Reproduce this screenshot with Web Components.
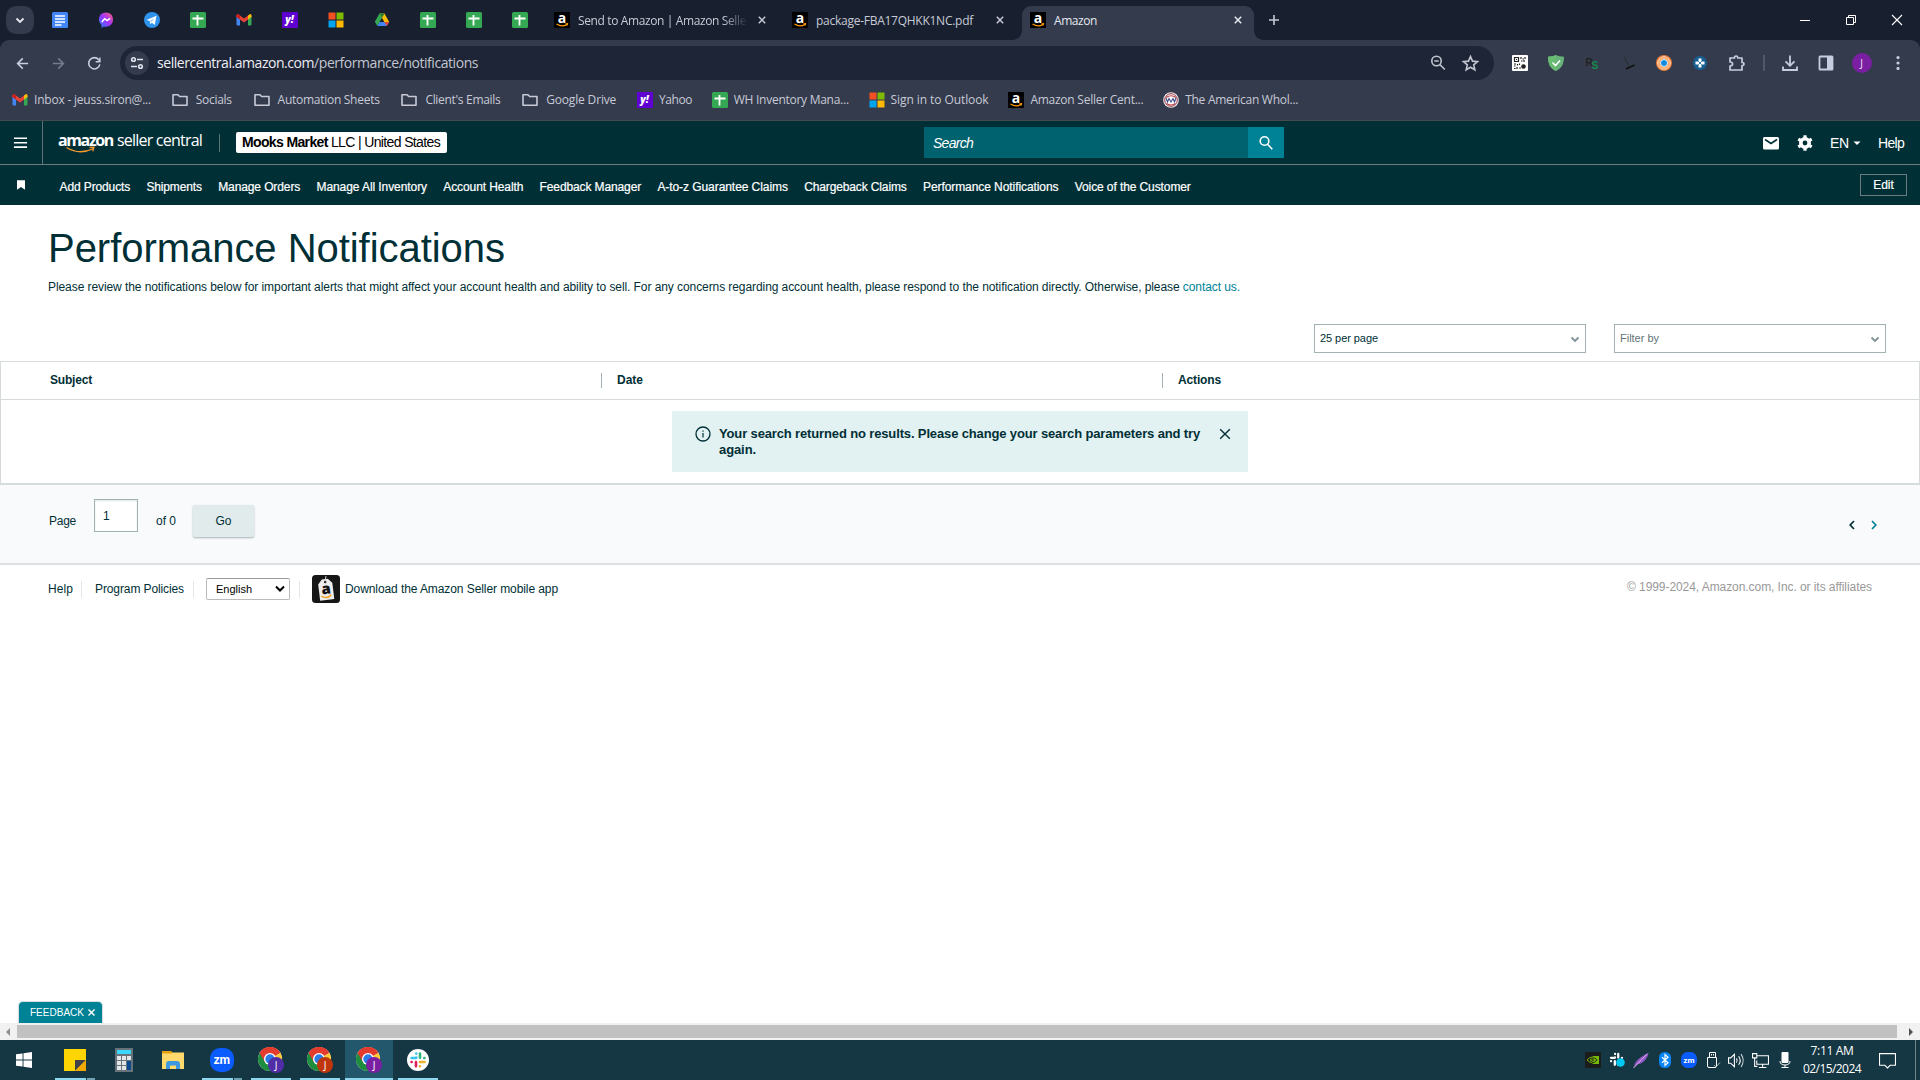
<!DOCTYPE html>
<html lang="en">
<head>
<meta charset="utf-8">
<title>Amazon</title>
<style>
    html, body { margin: 0; height: 100%; overflow: hidden; background: #fff; }
    body {
        display: flex;
        flex-direction: column;
        width: 1920px;
        height: 1080px;
        font: 12px/16px "Liberation Sans", Arial, sans-serif;
        color: #002f36;
    }
</style>
</head>
<body>
<tab-strip></tab-strip>
<browser-toolbar></browser-toolbar>
<bookmarks-bar></bookmarks-bar>
<seller-header></seller-header>
<seller-nav></seller-nav>
<notifications-page></notifications-page>
<feedback-bar></feedback-bar>
<scroll-bar></scroll-bar>
<task-bar></task-bar>

<script>
// Each icon is [viewBox, markup]
const CHROME = `<circle cx="12" cy="12" r="12" fill="#fff"/><path d="M12 12 1.6 6A12 12 0 0 1 22.4 6z" fill="#e33b2e"/><path d="M12 12 22.4 6A12 12 0 0 1 12 24z" fill="#fcc934"/><path d="M1.6 6A12 12 0 0 0 12 24L17.2 15 12 12z" fill="#1e8e3e"/><path d="M12 6h10.4A12 12 0 0 0 1.6 6l5.2 9z" fill="#e33b2e"/><circle cx="12" cy="12" r="6" fill="#fff"/><circle cx="12" cy="12" r="4.7" fill="#2a7de9"/>`;
const badge = (color) => `${CHROME}<circle cx="18" cy="18" r="8" fill="${color}"/><text x="18" y="21.6" font-family="Open Sans, sans-serif" font-size="10" fill="#fff" text-anchor="middle">J</text>`;
const amazonA = `<path fill="#000" d="M0 0h16v16H0z"/><text x="8" y="10.5" font-family="Open Sans, sans-serif" font-weight="700" font-size="14" fill="#fff" text-anchor="middle">a</text><path d="M2.5 12q5.500 3.500 10.500.4M11.500 11.800l2-.2-.4 1.900" fill="none" stroke="#f90" stroke-width="1.2"/>`;
const slack = (r, g, b, y) => `<g fill="none" stroke-width="3.400" stroke-linecap="round"><path stroke="${b}" d="M9.2 3v.1M9.2 8.300v.1M3 8.800h6"/><path stroke="${g}" d="M14 3v5.500M19.600 8.800h.2"/><path stroke="${y}" d="M14 14h6M14 19.500v.2"/><path stroke="${r}" d="M8.800 14v5.500M3 14h.2"/></g>`;

const ICONS = {
    docs: ["0 0 16 16", `<rect width="16" height="16" rx="1.5" fill="#4285f4"/><path d="M3 4h10M3 7h10M3 10h10M3 13h6.5" stroke="#fff" stroke-width="1.7"/>`],
    messenger: ["0 0 16 16", `<defs><linearGradient id="m" x1="0" y1="1" x2="1" y2="0"><stop offset="0" stop-color="#1688ff"/><stop offset=".5" stop-color="#a033ff"/><stop offset="1" stop-color="#ff6070"/></linearGradient></defs><path d="M8 .5C3.600.500 1 3.600 1 7.600c0 2.300 1 4.200 2.500 5.400V16l2.400-1.400c5 1.200 9.100-2.200 9.100-7C15 3.600 12.400.500 8 .5z" fill="url(#m)"/><path d="m3.800 10 2.800-3.300 2.500 1.800 3-2.200" fill="none" stroke="#fff" stroke-width="1.500"/>`],
    telegram: ["0 0 16 16", `<circle cx="8" cy="8" r="8" fill="#2f93ec"/><path d="m2.500 8 10-4.200-1.700 9.200-3-2.200-1.500 1.400-.5-3.200z" fill="#fff"/><path d="m6 9 4.500-3L7.500 10z" fill="#9cc5e8"/>`],
    sheets: ["0 0 16 16", `<rect width="16" height="16" rx="1.5" fill="#34a853"/><path d="M2.500 6.500h11M7.500 3v10.500" stroke="#fff" stroke-width="1.800"/>`],
    gmail: ["0 0 16 16", `<path d="M.5 3.500 4 6v7.500H1.500a1 1 0 0 1-1-1z" fill="#4285f4"/><path d="M15.500 3.500 12 6v7.500h2.500a1 1 0 0 0 1-1z" fill="#34a853"/><path d="M12 3.500 14 2q1.500-.2 1.500 1.500V5L12 7.600z" fill="#fbbc04"/><path d="M.5 5V3.500Q.5 1.800 2 2l6 4.500 4-3v4.100l-4 3z" fill="#ea4335"/><path d="M.5 5V3.500Q.5 1.800 2 2l2 1.500v4.100z" fill="#c5221f"/>`],
    yahoo: ["0 0 16 16", `<path fill="#5f01d1" d="M0 0h16v16H0z"/><text x="7.600" y="11" font-family="Open Sans, sans-serif" font-size="10" font-weight="800" font-style="italic" fill="#fff" text-anchor="middle">y!</text>`],
    microsoft: ["0 0 16 16", `<path fill="#f25022" d="M.5.500h7v7h-7z"/><path fill="#7fba00" d="M8.500.500h7v7h-7z"/><path fill="#00a4ef" d="M.5 8.500h7v7h-7z"/><path fill="#ffb900" d="M8.500 8.500h7v7h-7z"/>`],
    drive: ["0 0 16 16", `<path d="M5.500 1.500 8 5.800 3.300 14 .8 9.800z" fill="#34a853"/><path d="M5.500 1.500h5L15.200 10h-4.900z" fill="#fbbc04"/><path d="M5.500 1.500h5L8 5.800z" fill="#188038"/><path d="M3.300 14 5.700 9.900h9.500L12.800 14z" fill="#4285f4"/><path d="M12.800 14 10.400 9.900h4.800z" fill="#ea4335"/>`],
    amazon: ["0 0 16 16", amazonA],
    awhole: ["0 0 16 16", `<circle cx="8" cy="8" r="7.800" fill="#eee"/><circle cx="8" cy="8" r="6.300" fill="#fff" stroke="#9b3140" stroke-width="1"/><path d="M3 5.500q5-3.500 10 0M3.500 11.500q4.500 3 9 0" fill="none" stroke="#b74450" stroke-width="1.100"/><path d="m3 6 1.500 4L6 6.500 8 10l2-3.500 1.500 3.500L13 6" fill="none" stroke="#3f4e86" stroke-width="1.100"/>`],
    chevron: ["0 0 16 16", `<path d="m4.500 6.500 3.500 3.500 3.500-3.500" fill="none" stroke="currentColor" stroke-width="1.800"/>`],
    close: ["0 0 16 16", `<path d="m4.800 4.800 6.400 6.400m0-6.400-6.400 6.400" stroke="currentColor" stroke-width="1.500"/>`],
    plus: ["0 0 16 16", `<path d="M8 3v10M3 8h10" stroke="currentColor" stroke-width="1.600"/>`],
    minimize: ["0 0 16 16", `<path d="M3 8.500h10" stroke="#fff"/>`],
    restore: ["0 0 16 16", `<path d="M3.500 5.500h7v7h-7zM5.500 5.500v-2h7v7h-2" fill="none" stroke="#fff"/>`],
    winclose: ["0 0 16 16", `<path d="m3 3 10 10m0-10L3 13" stroke="#fff" stroke-width="1.100"/>`],
    back: ["0 0 16 16", `<path d="M14 8H3m5.300-5.500L2.800 8l5.500 5.500" fill="none" stroke="currentColor" stroke-width="1.700"/>`],
    forward: ["0 0 16 16", `<path d="M2 8h11M7.700 2.500 13.200 8l-5.500 5.500" fill="none" stroke="currentColor" stroke-width="1.700"/>`],
    reload: ["0 0 16 16", `<path d="M13.700 9A6 6 0 1 1 12.500 4l1.300 1.600" fill="none" stroke="currentColor" stroke-width="1.700"/><path d="M14.500 1.500v5.300H9.200V5.300H13V1.500z" fill="currentColor"/>`],
    tune: ["0 0 16 16", `<g fill="none" stroke="currentColor" stroke-width="1.600"><circle cx="4.500" cy="4.500" r="1.800"/><circle cx="11.500" cy="11.500" r="1.800"/><path d="M8 4.500h6M2 11.500h6"/></g>`],
    zoomout: ["0 0 16 16", `<g fill="none" stroke="currentColor" stroke-width="1.600"><circle cx="6.500" cy="6" r="4.700"/><path d="m9.800 9.500 5 5M4.300 6h4.400"/></g>`],
    star: ["0 0 16 16", `<path d="m8 1.500 1.900 4.300 4.700.4L11 9.300l1.100 4.600L8 11.500l-4.100 2.400L5 9.300 1.400 6.200l4.700-.4z" fill="none" stroke="currentColor" stroke-width="1.500"/>`],
    qr: ["0 0 16 16", `<rect width="16" height="16" rx="1" fill="#fff"/><path d="M2.500 2.500h4v4h-4zM4 4.500h1M9 2v2m1.500 0H12m1-2v2m-1 1v2M9 6h1.500M2 9h2m1.500 0v1.500M2 11h1.500M5 12v2M2 13.500h1.500M7.500 8.500v1.500M7 13h2" fill="none" stroke="#222" stroke-width="1.200"/><circle cx="11.500" cy="11.500" r="2.300" fill="#222"/>`],
    shield: ["0 0 16 16", `<path d="M8 0c2.500 1.200 5 1.700 8 1.700C16 9 13.500 13.500 8 16 2.500 13.500 0 9 0 1.700 3 1.700 5.500 1.200 8 0z" fill="#67b279"/><path d="M0 1.700C3 1.700 5.500 1.200 8 0v16C2.500 13.500 0 9 0 1.700z" fill="#68bc71"/><path d="m4.500 7.500 3 3 4.500-5" fill="none" stroke="#fff" stroke-width="1.600"/>`],
    rs: ["0 0 16 16", `<g font-family="Liberation Sans, sans-serif" font-weight="700"><text x="1.500" y="10.500" font-size="10" fill="#222">R</text><text x="7.500" y="13.500" font-size="10" fill="#168b4b">S</text></g>`],
    cart: ["0 0 16 16", `<path d="m4 1.500 5 10.500" stroke="#222" stroke-width=".7"/><path d="m6 14 8.500-4" stroke="#111" stroke-width="1.900"/>`],
    eye: ["0 0 16 16", `<circle cx="8" cy="8" r="8" fill="#e77a35"/><circle cx="8" cy="8" r="6.300" fill="#ffab6b" stroke="#f9d3b3"/><circle cx="8" cy="8" r="3.500" fill="#1489e0" stroke="#d3ecfa"/>`],
    bluecross: ["0 0 16 16", `<circle cx="8" cy="8" r="7" fill="#175f91"/><path d="M6.500 3.500h3v3h3v3h-3v3h-3v-3h-3v-3h3z" fill="#fff"/><path d="m6.300 6.300 3.400 3.400m0-3.400-3.400 3.400" stroke="#2e80b4" stroke-width="1"/>`],
    puzzle: ["0 0 18 18", `<path d="M2 4h4.500V3.600a1.600 1.600 0 0 1 3.200 0V4H14v4.500h.5a1.500 1.500 0 0 1 0 3H14V16H2v-4q2.600-.2 2.600-2T2 8z" fill="none" stroke="currentColor" stroke-width="1.700" stroke-linejoin="round"/>`],
    download: ["0 0 16 16", `<path d="M8 .500v10M3.500 6.300 8 10.800l4.500-4.500M1 11.500V15h14v-3.500" fill="none" stroke="currentColor" stroke-width="1.800"/>`],
    panel: ["0 0 16 16", `<rect x="1.500" y="1.500" width="13" height="13" rx=".6" fill="none" stroke="currentColor" stroke-width="1.800"/><path fill="currentColor" d="M9 1h6v14H9z"/>`],
    dots: ["0 0 16 16", `<g fill="currentColor"><circle cx="8" cy="2.600" r="1.600"/><circle cx="8" cy="8" r="1.600"/><circle cx="8" cy="13.400" r="1.600"/></g>`],
    folder: ["0 0 16 16", `<path d="M1 13.200V2.800h5l1.600 1.700H15v8.700z" fill="none" stroke="currentColor" stroke-width="1.600" stroke-linejoin="round"/>`],
    menu: ["0 0 16 16", `<path d="M1 3.500h14M1 8.200h14M1 12.900h14" stroke="#fff" stroke-width="1.700"/>`],
    bookmark: ["0 0 16 16", `<path d="M4 3.200h8v9.600L8 10l-4 2.800z" fill="#fff"/>`],
    search: ["0 0 16 16", `<g fill="none" stroke="#fff" stroke-width="1.600"><circle cx="6.500" cy="6" r="4.300"/><path d="m9.500 9.200 4.800 5"/></g>`],
    mail: ["0 0 16 16", `<rect y="2" width="16" height="12.500" rx="1.500" fill="#fff"/><path d="m2 4.500 6 4 6-4" fill="none" stroke="#002f36" stroke-width="1.600"/>`],
    gear: ["0 0 16 16", `<circle cx="8" cy="8" r="4.200" fill="none" stroke="#fff" stroke-width="3.600"/><path d="M8 .300v3M8 12.700v3M1.300 4.200 4 5.700m8 4.600 2.700 1.500m-13.400 0L4 10.300m8-4.600 2.700-1.500" stroke="#fff" stroke-width="3.200"/>`],
    caret: ["0 0 8 8", `<path d="M.500 2.500h7L4 6z" fill="#fff"/>`],
    info: ["0 0 16 16", `<circle cx="8" cy="8" r="7" fill="none" stroke="currentColor" stroke-width="1.300"/><path d="M8 7v4.500M8 4.400v1.300" stroke="currentColor" stroke-width="1.200"/>`],
    dismiss: ["0 0 16 16", `<path d="m3.200 3.200 9.600 9.600m0-9.600-9.600 9.600" stroke="currentColor" stroke-width="1.400"/>`],
    prev: ["0 0 16 16", `<path d="m10 4-3.800 4 3.800 4" fill="none" stroke="currentColor" stroke-width="1.700"/>`],
    next: ["0 0 16 16", `<path d="m6 4 3.800 4L6 12" fill="none" stroke="currentColor" stroke-width="1.700"/>`],
    sellerapp: ["0 0 28 28", `<rect width="28" height="28" rx="3.500" fill="#161616"/><g transform="rotate(-7 14 14)"><path d="M6.800 8.500 11 4h6l4 4.500V25H6.800z" fill="#eee"/><circle cx="14" cy="7" r="1.300" fill="#333"/><text x="14" y="19" font-family="Open Sans, sans-serif" font-weight="800" font-size="15" fill="#111" text-anchor="middle">a</text><path d="M8.500 20.500q5.500 4 10 0" fill="none" stroke="#f5a32c" stroke-width="1.600"/></g><path d="m13 6 1-5" stroke="#ccc"/>`],
    windows: ["0 0 16 16", `<path d="M0 2.300 6.600 1.400v6.200H0zM7.500 1.200 16 0v7.600H7.500zM0 8.400h6.600v6.200L0 13.700zM7.500 8.400H16V16l-8.500-1.200z" fill="#fff"/>`],
    notes: ["0 0 22 22", `<path fill="#fed500" d="M0 0h22v22H0z"/><path d="M11 22V11h11z" fill="#3f4148"/><path d="M11 22 22 11v11z" fill="#f1a900"/>`],
    calc: ["0 0 18 24", `<path fill="#68727b" d="M0 0h18v24H0z"/><path fill="#3bd7fb" d="M2 2h14v4H2z"/><path fill="#e2e6e9" d="M2 8h4v4H2zM7 8h4v4H7zM12 8h4v4h-4zM2 13h4v4H2zM7 13h4v4H7zM2 18h4v4H2zM7 18h4v4H7z"/><path fill="#08488d" d="M12 13h4v9h-4z"/>`],
    explorer: ["0 0 22 18", `<path fill="#e6a10c" d="M0 0h9l2 2v3H0z"/><path fill="#ffd96b" d="M0 2.500h9.500l1-1H22V18H0z"/><path fill="#3c98e0" d="M4 18v-5q0-3 3-3h8q3 0 3 3v5h-4v-3.500H8V18z"/>`],
    zoom: ["0 0 24 24", `<rect width="24" height="24" rx="10" fill="#0b5cff"/><text x="12" y="15.800" font-family="Lato, sans-serif" font-weight="900" font-size="12.500" fill="#fff" text-anchor="middle">zm</text>`],
    chrome1: ["0 0 26 26", badge("#512da8")],
    chrome2: ["0 0 26 26", badge("#bf360c")],
    chrome3: ["0 0 26 26", badge("#7b1fa2")],
    slack: ["0 0 22 22", `<circle cx="11" cy="11" r="11" fill="#fff"/><g transform="translate(2.200 2.200) scale(.77)">${slack("#e01e5a", "#2eb67d", "#36c5f0", "#ecb22e")}</g>`],
    nvidia: ["0 0 16 16", `<path fill="#1c1c1c" d="M0 0h16v16H0z"/><path fill="#76b900" d="M7.500 4H14v8H7.500z"/><path d="M2 8q4.500-5.500 10 0-5 5-10 0m3 0q2-2.800 5 0-2 2.500-5 0" fill="none" stroke="#76b900"/><path d="M7 6q3-1 5 2-2 3-5 2.500M7 8h2" fill="none" stroke="#1c1c1c" stroke-width=".9"/>`],
    slackTray: ["0 0 16 16", `<g transform="scale(.66)">${slack("#fff", "#fff", "#fff", "#fff")}</g><circle cx="11.500" cy="10.500" r="4.300" fill="#00c8f0"/>`],
    feather: ["0 0 16 16", `<path d="M1 15.500C1.500 8 8 5 15.500.500 15 6 10 12 4 12.500z" fill="#9259c4"/><path d="M.500 16 14 2" stroke="#e4b9f0" stroke-width=".9"/>`],
    bluetooth: ["0 0 16 16", `<rect x="2" width="12" height="16" rx="5.500" fill="#0a84f0"/><path d="m5 5.200 6 5.600-3 2.700v-11l3 2.700-6 5.600" fill="none" stroke="#fff" stroke-width="1.200"/>`],
    usb: ["0 0 16 16", `<g fill="none" stroke="#fff"><path d="M4.500 5.500v-5h6v5M2.500 5.500h9V14q0 1.500-1.500 1.500H4Q2.500 15.500 2.500 14zM6.500 2v1.500M8.500 2v1.500"/><path d="m9 13 2 2 4-4.500" stroke="#a9b9be"/></g>`],
    speaker: ["0 0 16 16", `<g fill="none" stroke="#fff"><path d="M.500 5.500h2l3.500-3.300v11.600L2.500 10.500h-2zM8 6q1.300 2 0 4M10 4q3 4 0 8"/><path d="M12.300 2q4 6 0 12" opacity=".8"/></g>`],
    network: ["0 0 16 16", `<g fill="none" stroke="#fff"><path d="M5 3.500h10.500v8h-11V8M10 11.500v3M6.500 14.500h7M.500 1.500h4v4h-4zM2.500 5.500v8H5"/></g>`],
    mic: ["0 0 16 16", `<rect x="4.500" y="0" width="7" height="11" rx="1" fill="#fff"/><path d="M3 9q0 4 5 4t5-4M8 13v2.500M4.500 15.500h7" fill="none" stroke="#fff"/>`],
    action: ["0 0 16 16", `<path d="M.500 1.500h15v11h-5L8 15l-2.500-2.500h-5z" fill="none" stroke="#fff"/>`],
    left: ["0 0 8 8", `<path d="M6 0v8L2 4z" fill="#8d8d8d"/>`],
    right: ["0 0 8 8", `<path d="M2 0v8l4-4z" fill="#505050"/>`]
};

/**
 * UiIcon
 * Attributes: name, size (width), h (height, defaults to size)
 */
class UiIcon extends HTMLElement {
    connectedCallback() {
        const root = this.shadowRoot || this.attachShadow({ mode: "open" });
        const size = Number(this.getAttribute("size") || 16);
        const height = Number(this.getAttribute("h") || size);
        const [box, markup] = ICONS[this.getAttribute("name")];
        root.innerHTML = `
            <style>
                :host { display: block; flex: none; width: ${size}px; height: ${height}px; }
                svg { display: block; overflow: visible; }
            </style>
            <svg viewBox="${box}" width="${size}" height="${height}">${markup}</svg>`;
    }
}

/**
 * FitText
 * One line of text, tracked so that it spans exactly the width in the "w" attribute
 */
class FitText extends HTMLElement {
    connectedCallback() {
        const w = Number(this.getAttribute("w"));
        const root = this.shadowRoot || this.attachShadow({ mode: "open" });
        root.innerHTML = `
            <style>
                :host { display: block; flex: none; width: ${w}px; white-space: nowrap; }
                span { display: inline-block; }
            </style>
            <span><slot></slot></span>`;
        const span = root.querySelector("span");
        const natural = span.getBoundingClientRect().width;
        const count = this.textContent.length;
        if (natural && count) span.style.letterSpacing = `${(w - natural) / count}px`;
    }
}

class BaseElement extends HTMLElement {
    connectedCallback() {
        if (this.shadowRoot) return;
        this.attachShadow({ mode: "open" }).innerHTML = this.render();
    }
}

class TabStrip extends BaseElement {
    render() {
        const pinned = ["docs", "messenger", "telegram", "sheets", "gmail", "yahoo", "microsoft", "drive", "sheets", "sheets", "sheets"];
        return `
            <style>
                :host { display: flex; flex: none; height: 40px; box-sizing: border-box; padding-left: 6px; background: #181f2f; color: #c7cad6; font: 12px/16px "Open Sans", sans-serif; }
                .list { display: grid; place-items: center; width: 28px; height: 28px; margin: 6px 3px 0 0; border-radius: 10px; background: #343b4d; color: #e6e8ef; }
                .pin { display: flex; align-items: center; width: 46px; height: 40px; box-sizing: border-box; padding-left: 15px; }
                .pin::after, .tab.sep::after { content: ""; width: 1.500px; height: 16px; margin-left: 15px; background: #454c5c; }
                .tab { display: flex; align-items: center; height: 40px; }
                .tab fit-text { margin: 1px 0 0 8px; }
                .first fit-text { -webkit-mask: linear-gradient(90deg, #000 145px, transparent 170px); }
                .active { position: relative; width: 232px; height: 34px; margin-top: 6px; box-sizing: border-box; padding: 0 8px; border-radius: 9px 9px 0 0; background: #343b4d; color: #e6e8ef; }
                .active ui-icon:first-child, .active .x { margin-top: -6px; }
                .active fit-text { margin-top: -5px; }
                .active::before, .active::after { content: ""; position: absolute; bottom: 0; width: 9px; height: 9px; }
                .active::before { left: -9px; background: radial-gradient(circle at 0 0, transparent 8.500px, #343b4d 9px); }
                .active::after { right: -9px; background: radial-gradient(circle at 100% 0, transparent 8.500px, #343b4d 9px); }
                .x { margin-left: auto; }
                .new { margin: 12px auto 0 12px; }
                .win { display: flex; align-items: center; height: 40px; }
                .win ui-icon { margin: 0 15px; }
            </style>
            <div class="list"><ui-icon name="chevron"></ui-icon></div>
            ${pinned.map(name => `<div class="pin"><ui-icon name="${name}"></ui-icon></div>`).join("")}
            <div class="tab first sep" style="width:238px;padding-left:11px;box-sizing:border-box">
                <ui-icon name="amazon"></ui-icon><fit-text w="168">Send to Amazon | Amazon Selle</fit-text><ui-icon name="close" style="margin-left:8px"></ui-icon>
            </div>
            <div class="tab" style="width:241px;padding-left:11px;box-sizing:border-box">
                <ui-icon name="amazon"></ui-icon><fit-text w="157">package-FBA17QHKK1NC.pdf</fit-text><ui-icon name="close" style="margin-left:19px"></ui-icon>
            </div>
            <div class="tab active"><ui-icon name="amazon"></ui-icon><fit-text w="43">Amazon</fit-text><ui-icon class="x" name="close"></ui-icon></div>
            <ui-icon class="new" name="plus"></ui-icon>
            <div class="win"><ui-icon name="minimize"></ui-icon><ui-icon name="restore"></ui-icon><ui-icon name="winclose"></ui-icon></div>`;
    }
}

class BrowserToolbar extends BaseElement {
    render() {
        const extensions = ["qr", "shield", "rs", "cart", "eye", "bluecross"];
        return `
            <style>
                :host { display: block; flex: none; height: 40px; background: #181f2f; color: #c7cde0; }
                .bar { display: flex; align-items: center; height: 40px; box-sizing: border-box; padding: 6px 4px 0; border-radius: 9px 9px 0 0; background: #343b4d; }
                .cell { display: grid; place-items: center; flex: none; width: 36px; height: 34px; }
                .off { color: #747b8c; }
                .omnibox { display: flex; align-items: center; width: 1374px; height: 34px; margin: 0 8px; box-sizing: border-box; padding: 0 8px 0 5px; border-radius: 17px; background: #1e2536; color: #c2c6d0; font: 14px/20px "Open Sans", sans-serif; }
                .site { display: grid; place-items: center; width: 24px; height: 24px; margin-right: 8px; border-radius: 12px; background: #343b4d; color: #e0e4ef; }
                .omnibox b { font-weight: 400; color: #eceef4; }
                .omnibox .cell { width: 32px; }
                .sep { width: 1.500px; height: 16px; margin: 0 7px 0 8px; background: #505869; }
                .me { display: grid; place-items: center; width: 20px; height: 20px; border-radius: 10px; background: #7b1fa2; color: #f0e6f5; font: 10px/20px "Open Sans", sans-serif; }
            </style>
            <div class="bar">
                <div class="cell"><ui-icon name="back" size="15"></ui-icon></div>
                <div class="cell off"><ui-icon name="forward" size="15"></ui-icon></div>
                <div class="cell"><ui-icon name="reload" size="15"></ui-icon></div>
                <div class="omnibox">
                    <div class="site"><ui-icon name="tune"></ui-icon></div>
                    <fit-text w="321"><b>sellercentral.amazon.com</b>/performance/notifications</fit-text>
                    <div class="cell" style="margin-left:auto"><ui-icon name="zoomout"></ui-icon></div>
                    <div class="cell"><ui-icon name="star" size="17"></ui-icon></div>
                </div>
                ${extensions.map(name => `<div class="cell"><ui-icon name="${name}"></ui-icon></div>`).join("")}
                <div class="cell" style="margin-left:1px"><ui-icon name="puzzle" size="18"></ui-icon></div>
                <div class="sep"></div>
                <div class="cell"><ui-icon name="download"></ui-icon></div>
                <div class="cell"><ui-icon name="panel"></ui-icon></div>
                <div class="cell"><div class="me">J</div></div>
                <div class="cell"><ui-icon name="dots"></ui-icon></div>
            </div>`;
    }
}

class BookmarksBar extends BaseElement {
    render() {
        // icon, label, label width
        const items = [
            ["gmail", "Inbox - jeuss.siron@...", 117],
            ["folder", "Socials", 36],
            ["folder", "Automation Sheets", 102],
            ["folder", "Client's Emails", 75],
            ["folder", "Google Drive", 70],
            ["yahoo", "Yahoo", 33],
            ["sheets", "WH Inventory Mana...", 115],
            ["microsoft", "Sign in to Outlook", 98],
            ["amazon", "Amazon Seller Cent...", 113],
            ["awhole", "The American Whol...", 113]
        ];
        return `
            <style>
                :host { display: flex; flex: none; align-items: center; gap: 19.800px; height: 41px; box-sizing: border-box; padding-left: 12px; border-bottom: 1px solid #46494e; background: #343b4d; color: #c7cad6; font: 12px/16px "Open Sans", sans-serif; }
                .item { display: flex; align-items: center; gap: 6px; }
                .item.folder { gap: 8px; margin: 0 1px; }
            </style>
            ${items.map(([icon, label, w]) => `<div class="item ${icon}"><ui-icon name="${icon}"></ui-icon><fit-text w="${w}">${label}</fit-text></div>`).join("")}`;
    }
}

class SellerHeader extends BaseElement {
    render() {
        return `
            <style>
                :host { display: flex; flex: none; align-items: center; height: 44px; box-sizing: border-box; border-bottom: 1px solid #6a7c80; background: #002f36; color: #fff; font-size: 14px; line-height: 18px; }
                .menu { display: flex; align-items: center; justify-content: center; width: 43px; height: 43px; box-sizing: border-box; padding-right: 1px; border-right: 1px solid #5d7377; }
                .logo { position: relative; display: flex; gap: 4px; width: 145px; margin: -5px 0 0 15px; font: 16px/20px "Open Sans", sans-serif; }
                .logo b { font-weight: 700; }
                .logo svg { position: absolute; left: 8px; top: 16px; }
                .rule { width: 1px; height: 18px; margin: 0 16px; background: #5d7377; }
                .account { width: 211px; height: 21px; box-sizing: border-box; padding: 1px 6px; border-radius: 2px; background: #fff; color: #000; }
                .search { display: flex; align-items: center; width: 360px; height: 31px; margin-left: 477px; background: #00616f; font-style: italic; }
                .search fit-text { margin-left: 9px; }
                .go { display: grid; place-items: center; width: 36px; height: 31px; margin-left: auto; background: #008296; }
                .tools { display: flex; align-items: center; margin: 0 16px 0 auto; }
            </style>
            <div class="menu"><ui-icon name="menu" size="15"></ui-icon></div>
            <div class="logo">
                <fit-text w="55"><b>amazon</b></fit-text><fit-text w="85">seller central</fit-text>
                <svg width="30" height="9"><path d="M.500 1.500q13 8 27 1M23.500 1.500l4.500-.3-1.300 4" fill="none" stroke="#f79a2d" stroke-width="1.300"/></svg>
            </div>
            <div class="rule"></div>
            <div class="account"><fit-text w="198"><b>Mooks Market</b> LLC | United States</fit-text></div>
            <div class="search"><fit-text w="40">Search</fit-text><div class="go"><ui-icon name="search"></ui-icon></div></div>
            <div class="tools">
                <ui-icon name="mail"></ui-icon>
                <ui-icon name="gear" style="margin-left:18px"></ui-icon>
                <fit-text w="19" style="margin-left:17px">EN</fit-text>
                <ui-icon name="caret" size="8" style="margin-left:4px"></ui-icon>
                <fit-text w="26" style="margin-left:17px">Help</fit-text>
            </div>`;
    }
}

class SellerNav extends BaseElement {
    render() {
        const links = [
            ["Add Products", 70.500], ["Shipments", 55.500], ["Manage Orders", 82], ["Manage All Inventory", 110.500],
            ["Account Health", 80], ["Feedback Manager", 101.500], ["A-to-z Guarantee Claims", 130.500],
            ["Chargeback Claims", 102.500], ["Performance Notifications", 135.500], ["Voice of the Customer", 116]
        ];
        return `
            <style>
                :host { display: flex; flex: none; align-items: center; height: 40px; background: #002f36; color: #fff; -webkit-text-stroke: .2px #fff; }
                .links { display: flex; gap: 16.300px; margin: 3px 0 0 30.600px; }
                .mark { margin-left: 13px; }
                button { width: 47px; height: 22px; margin: 0 13px 0 auto; padding: 0; border: 1px solid #6a7c80; background: none; color: #fff; font: inherit; }
            </style>
            <ui-icon class="mark" name="bookmark"></ui-icon>
            <div class="links">${links.map(([label, w]) => `<fit-text w="${w}">${label}</fit-text>`).join("")}</div>
            <button>Edit</button>`;
    }
}

/** Select-like box; the label is slotted */
class DropDown extends BaseElement {
    render() {
        return `
            <style>
                :host { display: flex; align-items: center; width: 272px; height: 29px; box-sizing: border-box; padding: 0 2px 1px 5px; border: 1px solid #a2b1b4; background: #fff; font-size: 11px; }
                ui-icon { margin: 2px 0 0 auto; color: #7f9296; }
            </style>
            <slot></slot><ui-icon name="chevron"></ui-icon>`;
    }
}

class AlertBox extends BaseElement {
    render() {
        return `
            <style>
                :host { display: flex; width: 576px; height: 61px; box-sizing: border-box; padding: 15px 15px 0 23px; background: #e2f1f2; font: bold 13px/16px "Liberation Sans", Arial, sans-serif; }
                .text { margin-left: 8px; }
                .close { margin-left: auto; }
            </style>
            <ui-icon name="info"></ui-icon>
            <div class="text"><slot></slot></div>
            <ui-icon class="close" name="dismiss"></ui-icon>`;
    }
}

class ResultTable extends BaseElement {
    render() {
        return `
            <style>
                :host { display: block; height: 124px; box-sizing: border-box; border: 1px solid #d5dbdb; border-bottom: 2px solid #d5dbdb; }
                .head { display: grid; grid-template-columns: 600px 561px 1fr; align-items: center; height: 38px; box-sizing: border-box; border-bottom: 1px solid #d5dbdb; font-weight: 700; }
                .head div { padding-left: 15px; height: 15px; line-height: 15px; }
                .head div + div { border-left: 1px solid #a2b1b4; }
                .head div:first-child { padding-left: 49px; }
                .body { display: flex; justify-content: center; padding-top: 11px; }
            </style>
            <div class="head"><div><fit-text w="42">Subject</fit-text></div><div><fit-text w="26">Date</fit-text></div><div><fit-text w="43">Actions</fit-text></div></div>
            <div class="body"><slot></slot></div>`;
    }
}

class PageControls extends BaseElement {
    render() {
        return `
            <style>
                :host { display: flex; height: 80px; box-sizing: border-box; padding: 0 38px 0 49px; border-bottom: 2px solid #dde1e4; background: #f8fafc; }
                .t { margin-top: 28px; }
                .page { width: 44px; height: 33px; margin: 14px 18px 0; box-sizing: border-box; padding: 8px 0 0 8px; border: 1px solid #a2b1b4; background: #fff; box-shadow: inset 0 1px 2px #dfe5e6; }
                .go { width: 61px; height: 32px; margin: 20px auto 0 17px; border-radius: 2px; background: #e2ebeb; text-align: center; line-height: 32px; box-shadow: 0 1px 2px #a7b4b6; }
                ui-icon { margin-top: 32px; }
                .next { margin-left: 6px; color: #008296; }
            </style>
            <fit-text class="t" w="27">Page</fit-text>
            <div class="page">1</div>
            <fit-text class="t" w="20">of 0</fit-text>
            <div class="go">Go</div>
            <ui-icon name="prev"></ui-icon><ui-icon class="next" name="next"></ui-icon>`;
    }
}

class PageFooter extends BaseElement {
    render() {
        return `
            <style>
                :host { display: flex; align-items: center; height: 48px; padding: 0 48px; }
                .rule { width: 1px; height: 17px; background: #e3e6e7; }
                .lang { display: flex; align-items: center; width: 84px; height: 22px; margin: 0 9px 0 12px; box-sizing: border-box; padding-left: 9px; border: 1px solid #bbb; border-top-color: #999; border-radius: 2px; color: #000; font-size: 11px; }
                .lang svg { margin-left: 23px; }
                .copy { margin: -4px 0 0 auto; color: #999; }
            </style>
            <fit-text w="25">Help</fit-text><div class="rule" style="margin:0 13px 0 8px"></div>
            <fit-text w="89">Program Policies</fit-text><div class="rule" style="margin-left:9px"></div>
            <div class="lang"><fit-text w="36">English</fit-text><svg width="10" height="8"><path d="m1 1.500 4 4 4-4" fill="none" stroke="#000" stroke-width="2"/></svg></div>
            <div class="rule"></div>
            <ui-icon name="sellerapp" size="28" style="margin:0 5px 0 12px"></ui-icon>
            <fit-text w="213">Download the Amazon Seller mobile app</fit-text>
            <fit-text class="copy" w="245">© 1999-2024, Amazon.com, Inc. or its affiliates</fit-text>`;
    }
}

class NotificationsPage extends BaseElement {
    render() {
        return `
            <style>
                :host { display: block; flex: 1; overflow: hidden; background: #fff; }
                h1 { margin: 20px 0 0 48px; font-size: 40px; line-height: 46px; font-weight: 400; }
                p { display: flex; margin: 8px 0 0 48px; }
                a { color: #008296; }
                .filters { display: flex; justify-content: flex-end; gap: 28px; margin: 29px 34px 8px 0; }
                .hint { color: #5f7377; }
            </style>
            <h1><fit-text w="457">Performance Notifications</fit-text></h1>
            <p><fit-text w="1192">Please review the notifications below for important alerts that might affect your account health and ability to sell. For any concerns regarding account health, please respond to the notification directly. Otherwise, please <a>contact us.</a></fit-text></p>
            <div class="filters">
                <drop-down><fit-text w="58">25 per page</fit-text></drop-down>
                <drop-down><fit-text w="39" class="hint">Filter by</fit-text></drop-down>
            </div>
            <result-table>
                <alert-box><fit-text w="481">Your search returned no results. Please change your search parameters and try</fit-text><fit-text w="37">again.</fit-text></alert-box>
            </result-table>
            <page-controls></page-controls>
            <page-footer></page-footer>`;
    }
}

class FeedbackBar extends BaseElement {
    render() {
        return `
            <style>
                :host { display: block; flex: none; height: 22px; padding-left: 18px; }
                .tab { display: flex; align-items: center; width: 85px; height: 22px; box-sizing: border-box; padding-left: 11px; border: 1px solid #d9dfe0; border-bottom: 0; border-radius: 5px 5px 0 0; background: #008296; color: #fff; font-size: 10px; line-height: 14px; }
            </style>
            <div class="tab"><fit-text w="54">FEEDBACK</fit-text><ui-icon name="close" size="15"></ui-icon></div>`;
    }
}

class ScrollBar extends BaseElement {
    render() {
        return `
            <style>
                :host { display: flex; flex: none; align-items: center; height: 17px; box-sizing: border-box; padding: 0 5px 0 4px; background: #f1f1f1; }
                .thumb { width: 1880px; height: 13px; margin: 0 auto 0 5px; background: #c1c1c1; }
            </style>
            <ui-icon name="left" size="8"></ui-icon><div class="thumb"></div><ui-icon name="right" size="8"></ui-icon>`;
    }
}

class TaskBar extends BaseElement {
    render() {
        // icon, width, height, running state: "" | "one" | "many" | "active"
        const apps = [
            ["windows", 16, 16, "start"], ["notes", 22, 22, "many"], ["calc", 18, 24, ""], ["explorer", 22, 18, ""],
            ["zoom", 24, 24, "many"], ["chrome1", 26, 26, "one"], ["chrome2", 26, 26, "one"], ["chrome3", 26, 26, "active"], ["slack", 22, 22, "one"]
        ];
        const tray = [["nvidia", 16], ["slackTray", 16], ["feather", 16], ["bluetooth", 16], ["zoom", 16], ["usb", 16], ["speaker", 17], ["network", 17], ["mic", 16]];
        return `
            <style>
                :host { display: flex; flex: none; align-items: center; height: 40px; background: #153743; color: #fff; font: 12px/18px "Open Sans", sans-serif; }
                .app { position: relative; display: grid; place-items: center; width: 48px; height: 40px; margin-right: 1px; }
                .start { margin-right: 3px; }
                .one::after, .many::after, .active::after { content: ""; position: absolute; left: 4px; right: 4px; bottom: 0; height: 2px; background: #8fd6ef; }
                .many::after { background: linear-gradient(90deg, #8fd6ef 31px, #153743 31px, #153743 32px, #6fa3b3 32px); }
                .active { background: #22576c; }
                .active::after { left: 0; right: 0; }
                .tray { display: flex; margin-left: auto; }
                .tray div { display: grid; place-items: center; width: 24.050px; height: 40px; }
                .clock { display: flex; flex-direction: column; align-items: center; width: 58px; margin: -1px 18px 0 6px; }
                .edge { width: 1px; height: 40px; margin: 0 4px 0 19px; background: #6f858c; }
            </style>
            ${apps.map(([name, w, h, state]) => `<div class="app ${state}"><ui-icon name="${name}" size="${w}" h="${h}"></ui-icon></div>`).join("")}
            <div class="tray">${tray.map(([name, size]) => `<div><ui-icon name="${name}" size="${size}"></ui-icon></div>`).join("")}</div>
            <div class="clock"><fit-text w="43">7:11 AM</fit-text><fit-text w="58">02/15/2024</fit-text></div>
            <ui-icon name="action" size="17"></ui-icon>
            <div class="edge"></div>`;
    }
}

customElements.define("ui-icon", UiIcon);
customElements.define("fit-text", FitText);
customElements.define("drop-down", DropDown);
customElements.define("alert-box", AlertBox);
customElements.define("result-table", ResultTable);
customElements.define("page-controls", PageControls);
customElements.define("page-footer", PageFooter);
customElements.define("tab-strip", TabStrip);
customElements.define("browser-toolbar", BrowserToolbar);
customElements.define("bookmarks-bar", BookmarksBar);
customElements.define("seller-header", SellerHeader);
customElements.define("seller-nav", SellerNav);
customElements.define("notifications-page", NotificationsPage);
customElements.define("feedback-bar", FeedbackBar);
customElements.define("scroll-bar", ScrollBar);
customElements.define("task-bar", TaskBar);
</script>
</body>
</html>
